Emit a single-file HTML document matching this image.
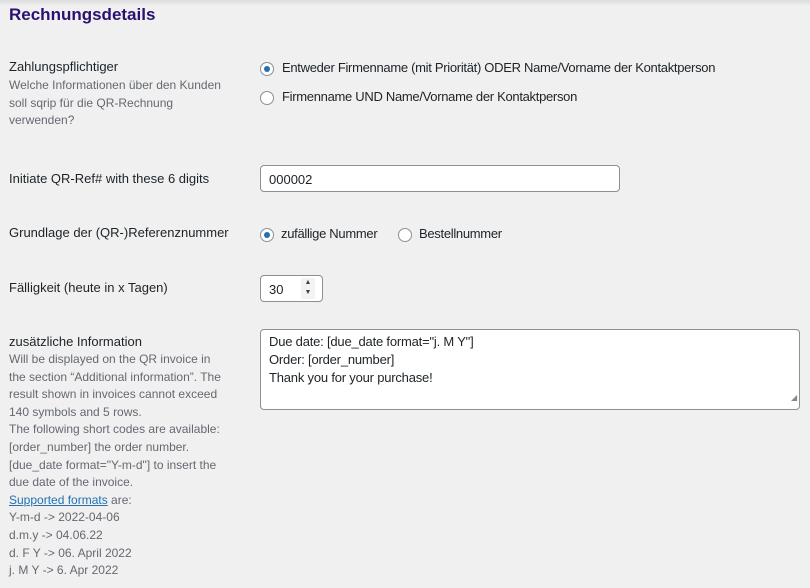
<!DOCTYPE html>
<html><head><meta charset="utf-8"><style>
body{margin:0;width:810px;height:588px;background:#f0f0f1;font-family:"Liberation Sans",sans-serif;position:relative;overflow:hidden;color:#1d2327}
.a{position:absolute;white-space:nowrap}
.t{font-size:17px;font-weight:bold;color:#2a1170;left:9px;top:5px}
.l{font-size:13px;left:9px}
.d{font-size:12px;color:#646970;left:9px;line-height:17.6px}
.r{position:absolute;width:14px;height:14px;border:1px solid #8c8f94;border-radius:50%;background:#fff;box-sizing:border-box}
.r.on::after{content:"";position:absolute;left:3px;top:3px;width:6px;height:6px;border-radius:50%;background:#2271b1}
.o{font-size:13px;letter-spacing:-0.3px}
.box{position:absolute;background:#fff;border:1px solid #8c8f94;border-radius:4px;box-sizing:border-box;font-size:13px}
a{color:#2271b1}
</style></head><body>
<div style="position:absolute;left:0;top:0;width:810px;height:6px;background:linear-gradient(#dcdcdc,#f0f0f1)"></div>
<div class="a t">Rechnungsdetails</div>
<div class="a l" style="top:59px">Zahlungspflichtiger</div>
<div class="a d" style="top:77px">Welche Informationen über den Kunden<br>soll sqrip für die QR-Rechnung<br>verwenden?</div>
<div class="r on" style="left:260px;top:62px"></div><div class="a o" style="left:282px;top:60px">Entweder Firmenname (mit Priorität) ODER Name/Vorname der Kontaktperson</div>
<div class="r" style="left:260px;top:91px"></div><div class="a o" style="left:282px;top:89px">Firmenname UND Name/Vorname der Kontaktperson</div>
<div class="a l" style="top:171px">Initiate QR-Ref# with these 6 digits</div>
<div class="box" style="left:260px;top:165px;width:360px;height:27px;padding:6px 8px">000002</div>
<div class="a l" style="top:225px">Grundlage der (QR-)Referenznummer</div>
<div class="r on" style="left:260px;top:228px"></div><div class="a o" style="left:281px;top:226px">zufällige Nummer</div>
<div class="r" style="left:398px;top:228px"></div><div class="a o" style="left:419px;top:226px">Bestellnummer</div>
<div class="a l" style="top:280px">Fälligkeit (heute in x Tagen)</div>
<div class="box" style="left:260px;top:275px;width:63px;height:27px;padding:6px 8px">30<span style="position:absolute;left:40px;top:2px;width:14px;height:21px;background:#f3f3f3;font-size:7px;line-height:10px;text-align:center;color:#444">▲<br>▼</span></div>
<div class="a l" style="top:334px">zusätzliche Information</div>
<div class="a d" style="top:351px">Will be displayed on the QR invoice in<br>the section “Additional information”. The<br>result shown in invoices cannot exceed<br>140 symbols and 5 rows.<br>The following short codes are available:<br>[order_number] the order number.<br>[due_date format="Y-m-d"] to insert the<br>due date of the invoice.<br><a href="#">Supported formats</a> are:<br>Y-m-d -&gt; 2022-04-06<br>d.m.y -&gt; 04.06.22<br>d. F Y -&gt; 06. April 2022<br>j. M Y -&gt; 6. Apr 2022</div>
<div class="box" style="left:260px;top:329px;width:540px;height:81px;padding:3px 8px;line-height:18px;letter-spacing:-0.2px">Due date: [due_date format="j. M Y"]<br>Order: [order_number]<br>Thank you for your purchase!<span style="position:absolute;right:2px;bottom:2px;font-size:8px;color:#888">◢</span></div>
</body></html>
